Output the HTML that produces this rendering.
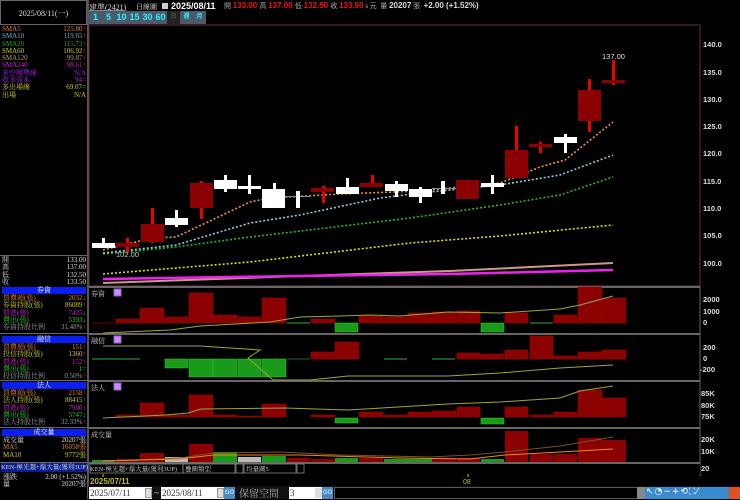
<!DOCTYPE html>
<html><head><meta charset="utf-8">
<style>
*{margin:0;padding:0;box-sizing:border-box}
body{width:740px;height:499px;background:#000;overflow:hidden;position:relative;font-family:"Liberation Serif","Noto Serif CJK SC","Noto Sans CJK TC",serif;color:#ddd}
.a{position:absolute;white-space:nowrap}
.s{font-size:7px;line-height:7px}
.r{text-align:right}
.hd{position:absolute;left:2px;width:84px;height:7px;background:#0a1ef0;color:#fff;font-size:7px;line-height:7px;text-align:center}
.btn{position:absolute;top:11px;height:13px;width:13px;background:#4a5a6a;color:#3ef;font:bold 9px/13px "Liberation Sans",sans-serif;text-align:center}
</style></head><body>
<!-- left panel frame -->
<div class="a" style="left:0;top:0;width:87px;height:25px;border:1px solid #666"></div>
<div class="a s" style="left:0;top:10px;width:87px;text-align:center;color:#ddd;font-size:8px">2025/08/11(一)</div>
<div class="a" style="left:87px;top:0;width:2px;height:499px;background:#555"></div>

<div class="a s" style="left:2px;top:26px;line-height:7.3px">
<div style="color:#e08030">SMA5</div><div style="color:#7ac">SMA10</div><div style="color:#2a2">SMA20</div><div style="color:#cc2">SMA60</div><div style="color:#b97">SMA120</div><div style="color:#c2c">SMA240</div><div style="color:#a2e">多空趨勢線</div><div style="color:#a2e">收多成本</div><div style="color:#cc2">多出場線</div><div style="color:#cc2">出場</div></div>
<div class="a s r" style="right:654px;top:26px;line-height:7.3px">
<div style="color:#e08030">125.80<span style="color:#f22">↑</span></div><div style="color:#7ac">119.65<span style="color:#f22">↑</span></div><div style="color:#2a2">115.73<span style="color:#f22">↑</span></div><div style="color:#cc2">106.92<span style="color:#f22">↑</span></div><div style="color:#b97">99.87<span style="color:#f22">↑</span></div><div style="color:#c2c">98.61<span style="color:#f22">↑</span></div><div style="color:#a2e">N/A</div><div style="color:#a2e">94=</div><div style="color:#cc2">69.07=</div><div style="color:#cc2">N/A</div></div>

<div class="a" style="left:0;top:255px;width:87px;height:1px;background:#666"></div>
<div class="a s" style="left:2px;top:257px;line-height:7.4px;color:#ddd"><div>開</div><div>高</div><div>低</div><div>收</div></div>
<div class="a s r" style="right:654px;top:257px;line-height:7.4px;color:#ddd"><div>133.00</div><div>137.00</div><div>132.50</div><div>133.50</div></div>

<div class="hd" style="top:287px">券資</div>
<div class="a s" style="left:3px;top:295px;line-height:7.3px"><div style="color:#e08030">買賣超(張)</div><div style="color:#cc2">券資持股(張)</div><div style="color:#c2c">買進(張)</div><div style="color:#2c2">賣出(張)</div><div style="color:#999">券資持股比例</div></div>
<div class="a s r" style="right:654px;top:295px;line-height:7.3px"><div style="color:#e08030">2032<span style="color:#2c2">↓</span></div><div style="color:#cc2">86089<span style="color:#f22">↑</span></div><div style="color:#c2c">7425<span style="color:#2c2">↓</span></div><div style="color:#2c2">5393<span style="color:#2c2">↓</span></div><div style="color:#999">31.48%<span style="color:#f22">↑</span></div></div>
<div class="a" style="left:0;top:333px;width:87px;height:1px;background:#666"></div>

<div class="hd" style="top:336px">融信</div>
<div class="a s" style="left:3px;top:344px;line-height:7.3px"><div style="color:#e08030">買賣超(張)</div><div style="color:#cc2">投信持股(張)</div><div style="color:#c2c">買進(張)</div><div style="color:#2c2">賣出(張)</div><div style="color:#999">投信持股比例</div></div>
<div class="a s r" style="right:654px;top:344px;line-height:7.3px"><div style="color:#e08030">151<span style="color:#f22">↑</span></div><div style="color:#cc2">1360<span style="color:#f22">↑</span></div><div style="color:#c2c">152<span style="color:#f22">↑</span></div><div style="color:#2c2">1=</div><div style="color:#999">0.50%<span style="color:#f22">↑</span></div></div>
<div class="a" style="left:0;top:380px;width:87px;height:1px;background:#666"></div>

<div class="hd" style="top:382px">法人</div>
<div class="a s" style="left:3px;top:390px;line-height:7.3px"><div style="color:#e08030">買賣超(張)</div><div style="color:#cc2">法人持股(張)</div><div style="color:#c2c">買進(張)</div><div style="color:#2c2">賣出(張)</div><div style="color:#999">法人持股比例</div></div>
<div class="a s r" style="right:654px;top:390px;line-height:7.3px"><div style="color:#e08030">2158<span style="color:#f22">↑</span></div><div style="color:#cc2">88415<span style="color:#f22">↑</span></div><div style="color:#c2c">7906<span style="color:#f22">↑</span></div><div style="color:#2c2">5747<span style="color:#2c2">↓</span></div><div style="color:#999">32.33%<span style="color:#f22">↑</span></div></div>
<div class="a" style="left:0;top:427px;width:87px;height:1px;background:#666"></div>

<div class="hd" style="top:429px">成交量</div>
<div class="a s" style="left:3px;top:437px;line-height:7.3px"><div style="color:#ddd">成交量</div><div style="color:#e08030">MA5</div><div style="color:#cc2">MA10</div></div>
<div class="a s r" style="right:654px;top:437px;line-height:7.3px"><div style="color:#ddd">20207張</div><div style="color:#e08030">16058張</div><div style="color:#cc2">9772張</div></div>
<div class="a" style="left:0;top:462px;width:87px;height:1px;background:#666"></div>
<div class="a s" style="left:1px;top:463px;width:86px;height:9px;background:#0a1e90;color:#ddd;line-height:9px;font-size:6.5px">KEN-極光趨+爆大量(獲利3UP)</div>
<div class="a s" style="left:3px;top:474px;line-height:7.3px;color:#ddd"><div>漲跌</div><div>量</div></div>
<div class="a s r" style="right:654px;top:474px;line-height:7.3px;color:#ddd"><div>2.00 (+1.52%)</div><div>20207張</div></div>

<!-- top header -->
<div class="a" style="left:89px;top:2px;font-size:8px;color:#ddd">建準(2421)</div>
<div class="a" style="left:89px;top:10px;width:36px;height:1px;background:#888"></div>
<div class="a" style="left:136px;top:2px;font-size:7px;color:#ddd">日線圖</div>
<div class="a" style="left:162px;top:3px;width:6px;height:6px;background:#ccc"></div>
<div class="a" style="left:171px;top:1px;font:bold 9px 'Liberation Sans',sans-serif;color:#fff">2025/08/11</div>
<div class="a" style="left:224px;top:1px;font:bold 8px 'Liberation Sans',sans-serif;color:#e11"><span style="color:#aaa;font:7px serif">開 </span>133.00 <span style="color:#aaa;font:7px serif">高 </span>137.00 <span style="color:#aaa;font:7px serif">低 </span>132.50 <span style="color:#aaa;font:7px serif">收 </span>133.50<span style="color:#aaa;font:7px serif"> s 元 &nbsp;量 </span><span style="color:#ddd">20207</span><span style="color:#aaa;font:7px serif"> 張 &nbsp;</span><span style="color:#ddd">+2.00 (+1.52%)</span></div>
<div class="btn" style="left:89px">1</div><div class="btn" style="left:102px">5</div><div class="btn" style="left:115px">10</div><div class="btn" style="left:128px">15</div><div class="btn" style="left:141px">30</div><div class="btn" style="left:154px">60</div>
<div class="btn" style="left:167px;background:#222;color:#555;font-size:6px">日</div><div class="btn" style="left:180px;font-size:6px">週</div><div class="btn" style="left:193px;font-size:6px">月</div>

<svg class="a" style="left:0;top:0" width="740" height="499" xmlns="http://www.w3.org/2000/svg">
<rect x="89" y="25" width="611" height="261" fill="none" stroke="#6a3040" stroke-width="1"/>
<g fill="#ddd" font-family="Liberation Sans,sans-serif" font-size="7.5" font-weight="bold">
<text x="703" y="47">140.0</text><text x="703" y="75">135.0</text><text x="703" y="102">130.0</text><text x="703" y="129">125.0</text><text x="703" y="156">120.0</text><text x="703" y="184">115.0</text><text x="703" y="211">110.0</text><text x="703" y="238">105.0</text><text x="703" y="266">100.0</text>
<text x="602" y="59" font-weight="normal">137.00</text>
<text x="116" y="257" font-weight="normal" fill="#bcb">102.00</text>
<text x="703" y="302">2000</text><text x="703" y="314">1000</text><text x="703" y="325">0</text>
<text x="703" y="350">200</text><text x="703" y="361">0</text><text x="700" y="372">-200</text>
<text x="701" y="396">85K</text><text x="701" y="408">80K</text><text x="701" y="419">75K</text>
<text x="701" y="442">20K</text><text x="701" y="454">10K</text><text x="701" y="471">20</text>
</g>
<!-- MA lines -->
<polyline points="103,283 300,276 450,271 613,263" fill="none" stroke="#c98" stroke-width="2"/>
<polyline points="103,279 300,276 450,274 613,270" fill="none" stroke="#e2e" stroke-width="2.5"/>
<polyline points="103,274 250,262 410,243 500,236 613,225" fill="none" stroke="#dd2" stroke-width="1.6" stroke-dasharray="2,2"/>
<polyline points="103,254 176,247 250,237 410,218 500,205 560,195 613,177" fill="none" stroke="#2b2" stroke-width="1.6" stroke-dasharray="2,2"/>
<polyline points="103,253 176,245 250,223 300,215 380,198 420,193 500,185 560,175 613,155" fill="none" stroke="#8cd" stroke-width="1.6" stroke-dasharray="2,2"/>
<polyline points="103,250 152,238 176,237 250,202 270,198 340,194 420,191 470,186 500,183 540,167 565,160 613,122" fill="none" stroke="#e92" stroke-width="1.6" stroke-dasharray="2,2"/>
<g id="c">
<!-- candles: wick then body -->
<rect x="102" y="238" width="3" height="10" fill="#fff"/><rect x="92" y="243" width="23" height="5" fill="#fff"/>
<rect x="126" y="238" width="3" height="14" fill="#e00"/><rect x="116" y="243" width="23" height="4" fill="#8b0000"/>
<rect x="151" y="208" width="3" height="35" fill="#e00"/><rect x="141" y="224" width="23" height="18" fill="#8b0000"/>
<rect x="175" y="210" width="3" height="17" fill="#fff"/><rect x="165" y="218" width="23" height="7" fill="#fff"/>
<rect x="200" y="181" width="3" height="38" fill="#e00"/><rect x="190" y="183" width="23" height="25" fill="#8b0000"/>
<rect x="224" y="175" width="3" height="17" fill="#fff"/><rect x="214" y="180" width="23" height="9" fill="#fff"/>
<rect x="248" y="175" width="3" height="19" fill="#fff"/><rect x="238" y="186" width="23" height="3" fill="#fff"/>
<rect x="273" y="183" width="3" height="25" fill="#fff"/><rect x="262" y="189" width="23" height="19" fill="#fff"/>
<rect x="286" y="196" width="24" height="1" fill="#888"/><rect x="296" y="191" width="4" height="17" fill="#fff"/>
<rect x="322" y="186" width="3" height="17" fill="#e00"/><rect x="311" y="188" width="23" height="4" fill="#8b0000"/>
<rect x="346" y="178" width="3" height="16" fill="#fff"/><rect x="336" y="187" width="23" height="7" fill="#fff"/>
<rect x="371" y="175" width="3" height="12" fill="#e00"/><rect x="360" y="183" width="23" height="4" fill="#8b0000"/>
<rect x="395" y="181" width="3" height="16" fill="#fff"/><rect x="385" y="184" width="23" height="7" fill="#fff"/>
<rect x="419" y="187" width="3" height="16" fill="#fff"/><rect x="409" y="189" width="23" height="8" fill="#fff"/>
<rect x="432" y="188" width="24" height="1" fill="#888"/><rect x="441" y="181" width="4" height="13" fill="#fff"/>
<rect x="456" y="180" width="23" height="19" fill="#8b0000"/>
<rect x="491" y="175" width="3" height="19" fill="#fff"/><rect x="481" y="183" width="23" height="4" fill="#fff"/>
<rect x="515" y="126" width="3" height="52" fill="#e00"/><rect x="505" y="150" width="23" height="28" fill="#8b0000"/>
<rect x="539" y="142" width="3" height="11" fill="#e00"/><rect x="529" y="144" width="23" height="3" fill="#8b0000"/>
<rect x="564" y="134" width="3" height="19" fill="#fff"/><rect x="554" y="137" width="23" height="6" fill="#fff"/>
<rect x="588" y="79" width="3" height="53" fill="#e00"/><rect x="578" y="90" width="23" height="31" fill="#8b0000"/>
<rect x="612" y="60" width="3" height="25" fill="#e00"/><rect x="602" y="80" width="23" height="3" fill="#8b0000"/>
</g>
<!-- subpanel frames -->
<g stroke="#666" stroke-width="2">
<line x1="89" y1="287" x2="700" y2="287"/><line x1="89" y1="334" x2="700" y2="334"/><line x1="89" y1="381" x2="700" y2="381"/><line x1="89" y1="428" x2="700" y2="428"/><line x1="89" y1="463" x2="700" y2="463"/>
</g>
<line x1="700" y1="287" x2="700" y2="476" stroke="#666"/>
<g font-size="7" fill="#ccc" font-family="Liberation Serif,Noto Serif CJK SC,serif">
<text x="91" y="296">券資</text><text x="91" y="343">融信</text><text x="91" y="390">法人</text><text x="91" y="437">成交量</text>
</g>
<g fill="#c8f" stroke="#86c"><rect x="114" y="289" width="7" height="7"/><rect x="114" y="336" width="7" height="7"/><rect x="114" y="383" width="7" height="7"/></g>
<!-- 券資 bars zero 323 -->
<g fill="#8b0000" stroke="#a00" stroke-width=".5">
<rect x="116" y="319" width="23" height="4"/><rect x="140" y="308" width="24" height="15"/><rect x="165" y="317" width="23" height="6"/><rect x="189" y="293" width="24" height="30"/><rect x="213" y="315" width="24" height="8"/><rect x="238" y="317" width="23" height="6"/><rect x="262" y="298" width="24" height="25"/><rect x="311" y="319" width="24" height="4"/><rect x="359" y="316" width="24" height="7"/><rect x="384" y="317" width="24" height="6"/><rect x="408" y="313" width="24" height="10"/><rect x="432" y="312" width="24" height="11"/><rect x="457" y="311" width="23" height="12"/><rect x="505" y="313" width="23" height="10"/><rect x="554" y="315" width="23" height="8"/><rect x="578" y="287" width="24" height="36"/><rect x="602" y="298" width="24" height="25"/>
</g>
<g fill="#1a9a1a" stroke="#3c3" stroke-width=".5"><rect x="335" y="323" width="23" height="9"/><rect x="481" y="323" width="23" height="9"/></g>
<g stroke="#3a3" stroke-width="1"><line x1="287" y1="323" x2="310" y2="323"/><line x1="530" y1="323" x2="553" y2="323"/></g>
<line x1="92" y1="323" x2="115" y2="323" stroke="#600"/>
<polyline points="103,333 170,330 200,326 270,322 300,317 340,316 370,315 400,316 448,312 500,313 560,309 580,305 613,296" fill="none" stroke="#9a3" stroke-width="1"/>
<!-- 融信 zero 359 -->
<g fill="#1a9a1a" stroke="#3c3" stroke-width=".5"><rect x="165" y="359" width="23" height="9"/><rect x="189" y="359" width="24" height="18"/><rect x="213" y="359" width="24" height="18"/><rect x="238" y="359" width="23" height="18"/><rect x="262" y="359" width="24" height="18"/></g>
<g stroke="#3a3"><line x1="92" y1="359" x2="140" y2="359"/><line x1="287" y1="359" x2="310" y2="359" stroke="#262"/><line x1="384" y1="359" x2="407" y2="359"/><line x1="432" y1="359" x2="455" y2="359"/></g>
<g fill="#8b0000" stroke="#a00" stroke-width=".5"><rect x="311" y="352" width="24" height="7"/><rect x="335" y="342" width="24" height="17"/><rect x="457" y="353" width="23" height="6"/><rect x="481" y="354" width="23" height="5"/><rect x="505" y="350" width="23" height="9"/><rect x="530" y="336" width="23" height="23"/><rect x="554" y="356" width="23" height="3"/><rect x="578" y="352" width="24" height="7"/><rect x="602" y="350" width="24" height="9"/></g>
<polyline points="103,346 200,346 260,350 248,358 273,380 310,380 348,376 448,376 500,373 560,368 613,365" fill="none" stroke="#9a3" stroke-width="1"/>
<!-- 法人 -->
<g fill="#8b0000" stroke="#a00" stroke-width=".5"><rect x="116" y="415" width="23" height="2"/><rect x="140" y="403" width="24" height="14"/><rect x="165" y="415" width="23" height="2"/><rect x="189" y="395" width="24" height="22"/><rect x="213" y="415" width="24" height="2"/><rect x="238" y="416" width="23" height="1"/><rect x="262" y="404" width="24" height="13"/><rect x="311" y="415" width="24" height="2"/><rect x="359" y="412" width="24" height="5"/><rect x="384" y="415" width="24" height="2"/><rect x="408" y="412" width="24" height="5"/><rect x="432" y="411" width="24" height="6"/><rect x="457" y="407" width="23" height="10"/><rect x="505" y="407" width="23" height="10"/><rect x="530" y="415" width="23" height="2"/><rect x="554" y="412" width="23" height="5"/><rect x="578" y="390" width="24" height="27"/><rect x="602" y="398" width="24" height="19"/></g>
<g fill="#1a9a1a" stroke="#3c3" stroke-width=".5"><rect x="335" y="418" width="23" height="5"/><rect x="481" y="418" width="23" height="6"/></g>
<polyline points="103,418 165,415 188,413 201,409 285,408 348,410 448,404 500,402 560,398 580,391 613,386" fill="none" stroke="#9a3" stroke-width="1"/>
<!-- volume base 462 -->
<g stroke-width=".5">
<rect x="92" y="460" width="23" height="2" fill="#1a9a1a"/><rect x="116" y="459" width="23" height="3" fill="#8b0000"/><rect x="140" y="453" width="24" height="9" fill="#8b0000"/><rect x="165" y="457" width="23" height="5" fill="#bbb"/><rect x="189" y="444" width="24" height="18" fill="#8b0000"/><rect x="213" y="452" width="24" height="10" fill="#1a9a1a"/><rect x="238" y="457" width="23" height="5" fill="#bbb"/><rect x="262" y="456" width="24" height="6" fill="#1a9a1a"/><rect x="287" y="458" width="23" height="4" fill="#8b0000"/><rect x="311" y="459" width="24" height="3" fill="#8b0000"/><rect x="335" y="458" width="23" height="4" fill="#1a9a1a"/><rect x="359" y="458" width="24" height="4" fill="#8b0000"/><rect x="384" y="459" width="24" height="3" fill="#1a9a1a"/><rect x="408" y="459" width="24" height="3" fill="#1a9a1a"/><rect x="432" y="458" width="24" height="4" fill="#8b0000"/><rect x="457" y="458" width="23" height="4" fill="#8b0000"/><rect x="481" y="459" width="23" height="3" fill="#1a9a1a"/><rect x="505" y="431" width="23" height="31" fill="#8b0000"/><rect x="530" y="454" width="23" height="8" fill="#8b0000"/><rect x="554" y="454" width="23" height="8" fill="#8b0000"/><rect x="578" y="438" width="24" height="24" fill="#8b0000"/><rect x="602" y="440" width="24" height="22" fill="#8b0000"/>
</g>
<polyline points="103,461 180,458 213,453 280,452 340,455 430,457 470,455 505,452 560,446 613,437" fill="none" stroke="#7a5020" stroke-width="1"/>
<polyline points="103,461 180,459 213,455 300,455 400,458 470,459 505,455 560,452 613,449" fill="none" stroke="#e82" stroke-width="1"/>
<!-- selects row -->
<rect x="89" y="464" width="611" height="10" fill="#000"/>
<g fill="none" stroke="#888" stroke-width=".8"><rect x="90" y="464" width="93" height="9"/><rect x="183" y="464" width="52" height="9"/><rect x="236" y="464" width="7" height="9"/><rect x="244" y="464" width="52" height="9"/><rect x="297" y="464" width="7" height="9"/></g>
<g font-size="6.5" fill="#ccc" font-family="Liberation Serif,Noto Serif CJK SC,serif"><text x="90" y="471">KEN-極光趨+爆大量(獲利3UP)</text><text x="185" y="471">疊圖類型</text><text x="246" y="471">均量圖5</text></g>
<line x1="103" y1="474" x2="103" y2="477" stroke="#cc2"/>
<line x1="468" y1="474" x2="468" y2="477" stroke="#cc2"/>
<text x="90" y="484" font-size="8" font-weight="bold" font-family="Liberation Sans,sans-serif" fill="#bb2">2025/07/11</text>
<text x="463" y="484" font-size="7" font-family="Liberation Sans,sans-serif" fill="#bb2">08</text>
</svg>

<!-- bottom bar -->
<div class="a" style="left:88px;top:486px;width:652px;height:13px;background:#111"></div>
<div class="a" style="left:89px;top:487px;width:63px;height:12px;background:#fff;color:#333;font:9px/12px 'Liberation Serif',serif;padding-left:1px">2025/07/11</div>
<div class="a" style="left:145px;top:488px;width:7px;height:10px;background:#ddd;border:1px solid #999"></div>
<div class="a" style="left:154px;top:487px;color:#ccc;font:9px/12px serif">~</div>
<div class="a" style="left:161px;top:487px;width:63px;height:12px;background:#fff;color:#333;font:9px/12px 'Liberation Serif',serif;padding-left:1px">2025/08/11</div>
<div class="a" style="left:217px;top:488px;width:7px;height:10px;background:#ddd;border:1px solid #999"></div>
<div class="a" style="left:224px;top:487px;width:11px;height:12px;background:#4a8ac0;color:#bdf;font:bold 6px/12px sans-serif;text-align:center">GO</div>
<div class="a" style="left:239px;top:486px;color:#aaa;font:10px/13px 'Noto Serif CJK SC',serif">保留空間</div>
<div class="a" style="left:289px;top:487px;width:33px;height:12px;background:#fff;color:#333;font:9px/12px serif;padding-left:1px">3</div>
<div class="a" style="left:315px;top:488px;width:7px;height:10px;background:#ddd"></div>
<div class="a" style="left:322px;top:487px;width:11px;height:12px;background:#4a8ac0;color:#bdf;font:bold 6px/12px sans-serif;text-align:center">GO</div>
<div class="a" style="left:334px;top:487px;width:305px;height:12px;background:#000;border:1px solid #555"></div>
<div class="a" style="left:637px;top:487px;width:8px;height:12px;background:#888"></div>
<div class="a" style="left:645px;top:487px;width:95px;height:12px;background:#3a8ad0"></div>
<div class="a" style="left:729px;top:487px;width:11px;height:12px;background:#e05020"></div>
<div class="a" style="left:646px;top:486px;color:#fff;font:9px/13px 'DejaVu Sans',sans-serif;letter-spacing:1px">↖◔−+⟲⛶⁄</div>
</body></html>
